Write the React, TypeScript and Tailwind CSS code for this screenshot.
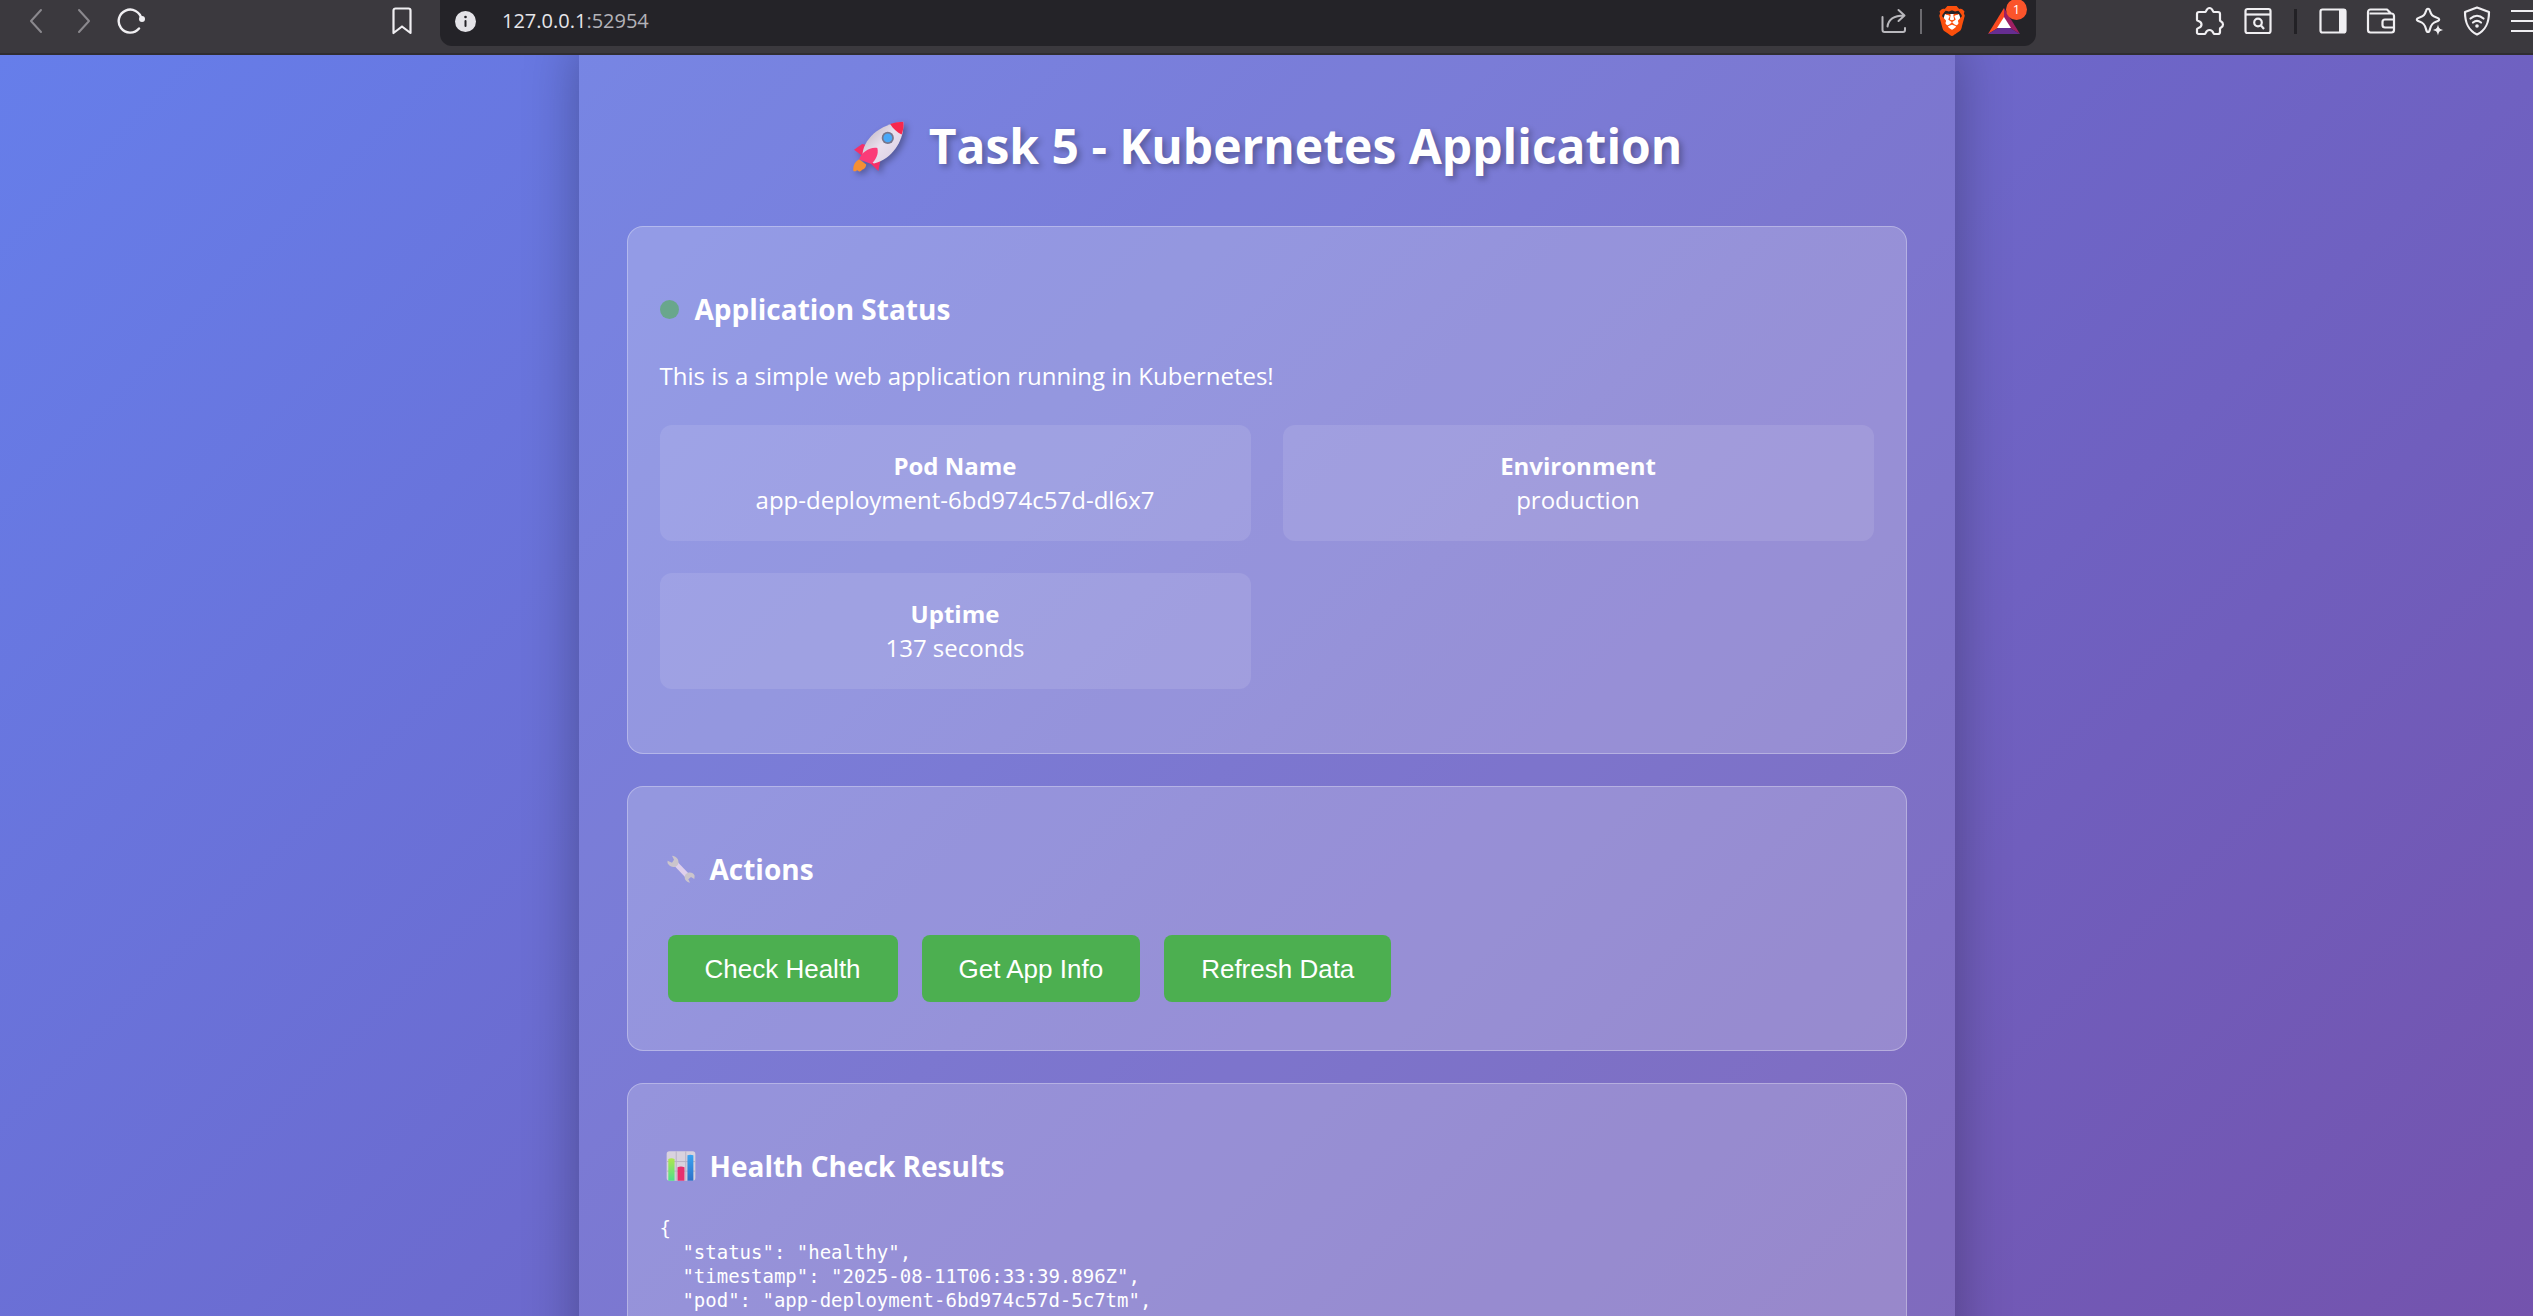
import type { ReactNode } from 'react';
import { SiBrave } from 'react-icons/si';

function IconButton({ label, children }: { label: string; children: ReactNode }) {
  return (
    <button type="button" aria-label={label} className="flex h-10 w-8 shrink-0 items-center justify-center">
      {children}
    </button>
  );
}

function BrowserBar() {
  return (
    <header className="relative z-10 flex h-[55px] shrink-0 items-start border-b-2 border-[#2f2d31] bg-[#3b393e] text-[#f0eff2]">
      <nav aria-label="Browser navigation" className="flex h-[42px] w-[440px] shrink-0 items-center justify-between pl-5 pr-[22px]">
        <div className="flex items-center gap-4">
          <IconButton label="Back">
            <svg width="16" height="26" viewBox="0 0 16 26" fill="none" stroke="#8b898e" strokeWidth="2" strokeLinecap="round" strokeLinejoin="round">
              <path d="M13 2 3 13l10 11" />
            </svg>
          </IconButton>
          <IconButton label="Forward">
            <svg width="16" height="26" viewBox="0 0 16 26" fill="none" stroke="#8b898e" strokeWidth="2" strokeLinecap="round" strokeLinejoin="round">
              <path d="m3 2 10 11L3 24" />
            </svg>
          </IconButton>
          <IconButton label="Reload">
            <svg width="30" height="28" viewBox="0 0 30 28" fill="none" stroke="currentColor" strokeWidth="2.4" strokeLinecap="round">
              <path d="M24.5 12A11.5 11.5 0 1 0 22 21.500" />
              <circle cx="25" cy="12" r="3" fill="currentColor" stroke="none" />
            </svg>
          </IconButton>
        </div>
        <IconButton label="Bookmark">
          <svg width="20" height="28" viewBox="0 0 20 28" fill="none" stroke="currentColor" strokeWidth="2.200" strokeLinejoin="round">
            <path d="M1.500 3.500a2 2 0 0 1 2-2h13a2 2 0 0 1 2 2V26L10 19.500 1.500 26z" />
          </svg>
        </IconButton>
      </nav>

      <div className="flex h-[46px] min-w-0 flex-1 items-start justify-between rounded-b-xl bg-[#242328] pl-[15px] pr-3">
        <div className="flex h-[42px] items-center gap-[26px]">
          <button type="button" aria-label="Site information">
            <svg width="21" height="21" viewBox="0 0 21 21">
              <circle cx="10.500" cy="10.500" r="10.500" fill="#e4e3e8" />
              <rect x="9.500" y="9" width="2" height="7" rx="1" fill="#242328" />
              <circle cx="10.500" cy="6" r="1.300" fill="#242328" />
            </svg>
          </button>
          <button type="button" aria-label="Address" className="font-['Open_Sans',sans-serif] text-[20px] leading-6 text-[#e6e5ea]">
            127.0.0.1<span className="text-[#b3b2b8]">:52954</span>
          </button>
        </div>
        <div className="flex h-[42px] items-center">
          <IconButton label="Share">
            <svg width="26" height="26" viewBox="0 0 26 26" fill="none" stroke="#b9b8bd" strokeWidth="2" strokeLinecap="round" strokeLinejoin="round">
              <path d="M1.500 9v13a2 2 0 0 0 2 2h18.500a2 2 0 0 0 2-2v-2" />
              <path d="M6.500 18.500C7.500 11 13 7.500 23 7.500M17.500 2 23.500 7.500l-6 5.500" />
            </svg>
          </IconButton>
          <span className="mx-2.5 h-[25px] w-0.5 bg-[#6c6b70]" />
          <button type="button" aria-label="Brave Shields" className="ml-1 flex h-10 w-8 items-center justify-center">
            <svg width="30" height="30" viewBox="0 0 30 30">
              <path d="M8 8h14l2 6-4 8-5 4-5-4-4-8z" fill="#fff" />
              <SiBrave size={30} color="#fb4f0c" />
            </svg>
          </button>
          <button type="button" aria-label="Brave Rewards, 1 notification" className="relative ml-5 flex h-10 w-9 items-center">
            <svg width="32" height="26" viewBox="0 0 32 26">
              <path d="M16 0 0 26l10-6 6-10z" fill="#fb4a20" />
              <path d="m16 0 16 26-10-6-6-10z" fill="#9e1f63" />
              <path d="M0 26h32l-10-6H10z" fill="#662d91" />
              <path d="m16 9 7 11H9z" fill="#fff" />
            </svg>
            <span className="absolute -top-0.5 left-[18px] flex size-[21px] items-center justify-center rounded-full bg-[#fb542b] font-['Open_Sans',sans-serif] text-[13px] leading-none text-white">
              1
            </span>
          </button>
        </div>
      </div>

      <div className="flex h-[42px] w-[497px] shrink-0 items-center justify-end gap-4">
        <IconButton label="Extensions">
          <svg width="30" height="30" viewBox="0 0 30 30" fill="none" stroke="currentColor" strokeWidth="2.200" strokeLinejoin="round">
            <path d="M4 6h6.500c.8 0 .8-4 4-4s3.200 4 4 4H23a2 2 0 0 1 2 2v6.500c0 .8 3 .8 3 4s-3 3.200-3 4V26a2 2 0 0 1-2 2h-4c-1 0-.5-4-4.500-4s-3.500 4-4.500 4H3.500A1.500 1.500 0 0 1 2 26.500v-3.500c0-1.500 4.500-.5 4.500-4.500S2 15.500 2 14V8a2 2 0 0 1 2-2z" />
          </svg>
        </IconButton>
        <IconButton label="Search tabs">
          <svg width="28" height="28" viewBox="0 0 28 28" fill="none" stroke="currentColor" strokeWidth="2.200">
            <rect x="1.500" y="2" width="25" height="24" rx="2" />
            <path d="M1.500 7.500h25" />
            <circle cx="14" cy="15.500" r="3.800" />
            <path d="m17 18.500 3 3.500" />
          </svg>
        </IconButton>
        <span className="mx-1 h-[25px] w-[3px] bg-[#222125]" />
        <IconButton label="Sidebar">
          <svg width="28" height="26" viewBox="0 0 28 26" fill="none" stroke="currentColor" strokeWidth="2.200">
            <rect x="1.500" y="1.500" width="25" height="23" rx="2" />
            <path d="M20 1h5a2 2 0 0 1 2 2v20a2 2 0 0 1-2 2h-5z" fill="currentColor" stroke="none" />
          </svg>
        </IconButton>
        <IconButton label="Wallet">
          <svg width="30" height="26" viewBox="0 0 30 26" fill="none" stroke="currentColor" strokeWidth="2.200" strokeLinejoin="round">
            <path d="M2 4v18a2.500 2.500 0 0 0 2.500 2.500h21A2.500 2.500 0 0 0 28 22V8a2.500 2.500 0 0 0-2.500-2.500H3.500M2 4a2.500 2.500 0 0 1 2.500-2.500H21l4 4" />
            <path d="M28 11.500h-9a2.500 2.500 0 0 0-2.500 2.500v3a2.500 2.500 0 0 0 2.500 2.500h9" />
          </svg>
        </IconButton>
        <IconButton label="Leo AI">
          <svg width="30" height="30" viewBox="0 0 30 30" fill="none" stroke="currentColor" strokeWidth="2.200" strokeLinejoin="round">
            <path d="M12 5c.8-3 3.200-3 4 0 1.200 4 2.500 5 6.500 6.500 3.500 1.200 3.500 3 0 4-4 1.500-5.300 3-6.500 7.500-.8 4-3.200 4-4 0-1.200-4.500-2.500-6-6.500-7.500-3.500-1-3.500-2.800 0-4C9.500 10 10.800 9 12 5z" />
            <path d="M24 18.500c.8 3.800 1.700 4.700 5.500 5.500-3.800.8-4.700 1.700-5.500 5.500-.8-3.800-1.700-4.700-5.500-5.500 3.800-.8 4.700-1.700 5.500-5.500z" fill="currentColor" stroke="none" />
          </svg>
        </IconButton>
        <IconButton label="VPN">
          <svg width="28" height="30" viewBox="0 0 28 30" fill="none" stroke="currentColor" strokeWidth="2.200" strokeLinejoin="round" strokeLinecap="round">
            <path d="M14 1.500 26 6c0 11-3 18-12 22.500C5 24 2 17 2 6z" />
            <path d="M7.500 12.500c4-3.500 9-3.500 13 0M10 16.500c2.500-2 5.500-2 8 0" />
            <circle cx="14" cy="20" r="1.800" fill="currentColor" stroke="none" />
          </svg>
        </IconButton>
        <button type="button" aria-label="Menu" className="ml-0.5 flex w-[22px] flex-col gap-2">
          <span className="h-0.5 bg-current" />
          <span className="h-0.5 bg-current" />
          <span className="h-0.5 bg-current" />
        </button>
      </div>
    </header>
  );
}

function Rocket() {
  return (
    <svg className="h-[54px] w-[54px] drop-shadow-[3px_3px_3px_rgba(0,0,0,0.3)]" viewBox="40 40 160 160" aria-hidden="true">
      <defs>
        <linearGradient id="rocket-body" x1="0" y1="0" x2="1" y2="1">
          <stop offset="0.2" stopColor="#c9bfcb" />
          <stop offset="0.5" stopColor="#e9e0ee" />
          <stop offset="1" stopColor="#d6cbe0" />
        </linearGradient>
      </defs>
      <path d="M64 159c-14 8-19 21-17 35 6 3 9-1 12-2 4 6 10 3 14-2 8-1 12-9 12-15z" fill="#f68f33" />
      <path d="m49 131 24-17 16 4-17 30zM98 172l23 22 6-30-18-14z" fill="#f52f68" />
      <path d="M74 152c-2-48 48-98 121-104 4 54-31 110-87 124z" fill="url(#rocket-body)" />
      <path d="M156 55c14-5 27-7 39-7 2 13 0 25-5 38-13-6-25-16-34-31z" fill="#f8274d" />
      <path d="M64 159c8-20 31-37 54-33 5 17-5 37-18 47z" fill="#fb3b78" />
      <circle cx="149" cy="96" r="18" fill="#77768c" />
      <circle cx="149" cy="96" r="13" fill="#4aa8f8" />
    </svg>
  );
}

function Wrench() {
  return (
    <svg className="size-[30px]" viewBox="34 40 90 90" aria-hidden="true">
      <path d="m56 72 12-9 36 38-10 11z" fill="#dfd0ec" />
      <path d="M52 45c12 0 22 11 19 24-5 12-21 14-30 2-3-4-3-7-2-11l13 6 6-9z" fill="#cbc5cc" />
      <path d="M106 126c-14-2-20-15-13-25 8-8 22-8 27 4l-1 10-10-6-8 7z" fill="#cbc5cc" />
    </svg>
  );
}

function BarChart() {
  return (
    <svg className="size-[30px]" viewBox="34 33 91 91" aria-hidden="true">
      <defs>
        <linearGradient id="bar-green" x1="0" y1="0" x2="0" y2="1">
          <stop offset="0" stopColor="#b0e64c" />
          <stop offset="1" stopColor="#4fe08a" />
        </linearGradient>
        <linearGradient id="bar-blue" x1="0" y1="0" x2="0" y2="1">
          <stop offset="0" stopColor="#39a4f2" />
          <stop offset="1" stopColor="#2d70c9" />
        </linearGradient>
      </defs>
      <rect x="36" y="34" width="87" height="89" rx="8" fill="#d8d2de" />
      <path d="M65 34v89M94 34v89M36 65h87M36 94h87" stroke="#b9b2c4" strokeWidth="3" />
      <path d="M41 57q9-4 19 0v66H41z" fill="url(#bar-green)" />
      <path d="M69 82q10-4 21 0v41H69z" fill="#e62f6e" />
      <path d="M99 46q9-4 18 0v77H99z" fill="url(#bar-blue)" />
    </svg>
  );
}

function Card({ title, icon, children }: { title: string; icon: ReactNode; children: ReactNode }) {
  return (
    <section className="rounded-2xl border border-white/30 bg-white/20 p-8">
      <h2 className="my-[30px] flex items-center text-[28px] font-bold leading-10">
        {icon}
        {title}
      </h2>
      {children}
    </section>
  );
}

const facts = [
  { label: 'Pod Name', value: 'app-deployment-6bd974c57d-dl6x7' },
  { label: 'Environment', value: 'production' },
  { label: 'Uptime', value: '137 seconds' },
];

const actions = ['Check Health', 'Get App Info', 'Refresh Data'];

const healthResult = `{
  "status": "healthy",
  "timestamp": "2025-08-11T06:33:39.896Z",
  "pod": "app-deployment-6bd974c57d-5c7tm",
  "version": "1.0.0"
}`;

export default function App() {
  return (
    <div className="flex h-screen flex-col overflow-hidden font-['Open_Sans',sans-serif] text-white">
      <BrowserBar />
      <div className="min-h-0 flex-1 overflow-hidden">
        <div className="min-h-[1960px] bg-[linear-gradient(135deg,#667eea_0%,#764ba2_100%)]">
          <main className="relative -top-6 mx-auto flex min-h-[1900px] w-full max-w-[1376px] flex-col gap-8 bg-white/10 px-12 pt-[81px] shadow-[0_13px_51px_rgba(0,0,0,0.3)]">
            <h1 className="mb-3.5 flex items-center justify-center gap-6 text-[48px] font-bold leading-[68px] [text-shadow:3px_3px_6px_rgba(0,0,0,0.3)]">
              <Rocket />
              Task 5 - Kubernetes Application
            </h1>

            <Card title="Application Status" icon={<span className="mr-4 size-[19px] rounded-full bg-[#4caf50] opacity-60" />}>
              <p className="text-[24px] leading-[34px]">This is a simple web application running in Kubernetes!</p>
              <dl className="my-8 grid grid-cols-2 gap-8">
                {facts.map((fact) => (
                  <div key={fact.label} className="rounded-xl bg-white/10 p-6 text-center text-[24px] leading-[34px]">
                    <dt className="font-bold">{fact.label}</dt>
                    <dd>{fact.value}</dd>
                  </div>
                ))}
              </dl>
            </Card>

            <Card title="Actions" icon={<span className="ml-1.5 mr-3.5"><Wrench /></span>}>
              <div className="mx-2 mb-4 mt-[46px] flex flex-wrap gap-6">
                {actions.map((action) => (
                  <button key={action} type="button" className="h-[67px] rounded-lg bg-[#4caf50] px-[37px] font-['Liberation_Sans',Arial,sans-serif] text-[26px] leading-[30px]">
                    {action}
                  </button>
                ))}
              </div>
            </Card>

            <Card title="Health Check Results" icon={<span className="ml-1.5 mr-3.5"><BarChart /></span>}>
              <pre className="font-['DejaVu_Sans_Mono',monospace] text-[19px] leading-6">{healthResult}</pre>
            </Card>
          </main>
        </div>
      </div>
    </div>
  );
}
